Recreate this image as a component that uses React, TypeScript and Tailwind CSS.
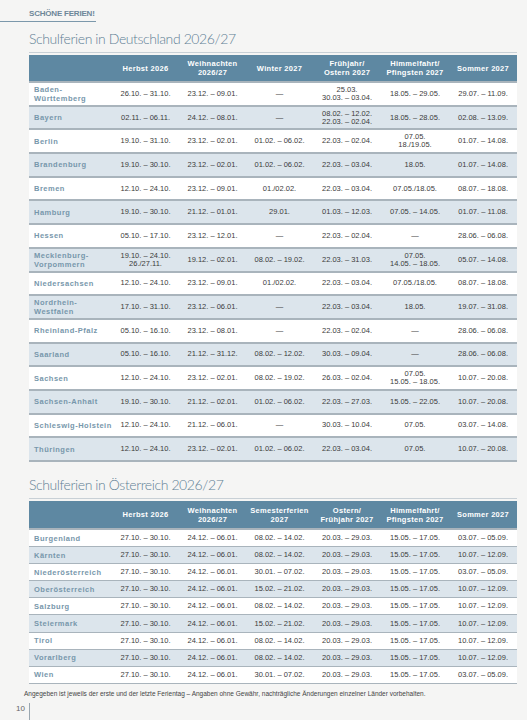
type Row = string[];

const deHead = [
  "",
  "Herbst 2026",
  "Weihnachten\n2026/27",
  "Winter 2027",
  "Frühjahr/\nOstern 2027",
  "Himmelfahrt/\nPfingsten 2027",
  "Sommer 2027",
];

const atHead = [
  "",
  "Herbst 2026",
  "Weihnachten\n2026/27",
  "Semesterferien\n2027",
  "Ostern/\nFrühjahr 2027",
  "Himmelfahrt/\nPfingsten 2027",
  "Sommer 2027",
];

const de: Row[] = [
  ["Baden-\nWürttemberg", "26.10. – 31.10.", "23.12. – 09.01.", "—", "25.03.\n30.03. – 03.04.", "18.05. – 29.05.", "29.07. – 11.09."],
  ["Bayern", "02.11. – 06.11.", "24.12. – 08.01.", "—", "08.02. – 12.02.\n22.03. – 02.04.", "18.05. – 28.05.", "02.08. – 13.09."],
  ["Berlin", "19.10. – 31.10.", "23.12. – 02.01.", "01.02. – 06.02.", "22.03. – 02.04.", "07.05.\n18./19.05.", "01.07. – 14.08."],
  ["Brandenburg", "19.10. – 30.10.", "23.12. – 02.01.", "01.02. – 06.02.", "22.03. – 03.04.", "18.05.", "01.07. – 14.08."],
  ["Bremen", "12.10. – 24.10.", "23.12. – 09.01.", "01./02.02.", "22.03. – 03.04.", "07.05./18.05.", "08.07. – 18.08."],
  ["Hamburg", "19.10. – 30.10.", "21.12. – 01.01.", "29.01.", "01.03. – 12.03.", "07.05. – 14.05.", "01.07. – 11.08."],
  ["Hessen", "05.10. – 17.10.", "23.12. – 12.01.", "—", "22.03. – 02.04.", "—", "28.06. – 06.08."],
  ["Mecklenburg-\nVorpommern", "19.10. – 24.10.\n26./27.11.", "19.12. – 02.01.", "08.02. – 19.02.", "22.03. – 31.03.", "07.05.\n14.05. – 18.05.", "05.07. – 14.08."],
  ["Niedersachsen", "12.10. – 24.10.", "23.12. – 09.01.", "01./02.02.", "22.03. – 03.04.", "07.05./18.05.", "08.07. – 18.08."],
  ["Nordrhein-\nWestfalen", "17.10. – 31.10.", "23.12. – 06.01.", "—", "22.03. – 03.04.", "18.05.", "19.07. – 31.08."],
  ["Rheinland-Pfalz", "05.10. – 16.10.", "23.12. – 08.01.", "—", "22.03. – 02.04.", "—", "28.06. – 06.08."],
  ["Saarland", "05.10. – 16.10.", "21.12. – 31.12.", "08.02. – 12.02.", "30.03. – 09.04.", "—", "28.06. – 06.08."],
  ["Sachsen", "12.10. – 24.10.", "23.12. – 02.01.", "08.02. – 19.02.", "26.03. – 02.04.", "07.05.\n15.05. – 18.05.", "10.07. – 20.08."],
  ["Sachsen-Anhalt", "19.10. – 30.10.", "21.12. – 02.01.", "01.02. – 06.02.", "22.03. – 27.03.", "15.05. – 22.05.", "10.07. – 20.08."],
  ["Schleswig-Holstein", "12.10. – 24.10.", "21.12. – 06.01.", "—", "30.03. – 10.04.", "07.05.", "03.07. – 14.08."],
  ["Thüringen", "12.10. – 24.10.", "23.12. – 02.01.", "01.02. – 06.02.", "22.03. – 03.04.", "07.05.", "10.07. – 20.08."],
];

const at: Row[] = [
  ["Burgenland", "08.02. – 14.02.", "03.07. – 05.09."],
  ["Kärnten", "08.02. – 14.02.", "10.07. – 12.09."],
  ["Niederösterreich", "30.01. – 07.02.", "03.07. – 05.09."],
  ["Oberösterreich", "15.02. – 21.02.", "10.07. – 12.09."],
  ["Salzburg", "08.02. – 14.02.", "10.07. – 12.09."],
  ["Steiermark", "15.02. – 21.02.", "10.07. – 12.09."],
  ["Tirol", "08.02. – 14.02.", "10.07. – 12.09."],
  ["Vorarlberg", "08.02. – 14.02.", "10.07. – 12.09."],
  ["Wien", "30.01. – 07.02.", "03.07. – 05.09."],
].map(([land, sem, som]) => [land, "27.10. – 30.10.", "24.12. – 06.01.", sem, "20.03. – 29.03.", "15.05. – 17.05.", som]);

function Table({ head, rows, compact }: { head: string[]; rows: Row[]; compact?: boolean }) {
  return (
    <div className="border-t border-[#c8d0d6] pt-[2px]">
      {/* header */}
      <div
        className={`grid grid-cols-[83px_67px_67px_67px_68px_68px_68px] bg-[#5e88a2] border-b-2 border-[#a9b4bc] ${
          compact ? "h-[29px]" : "h-[28px]"
        }`}
      >
        {head.map((h, i) => (
          <div
            key={i}
            className="flex items-center justify-center whitespace-pre-line text-center text-[7.5px] font-bold leading-[9px] tracking-[0.3px] text-white"
          >
            {h}
          </div>
        ))}
      </div>
      {rows.map((r, i) => (
        <div
          key={i}
          className={`grid grid-cols-[83px_67px_67px_67px_68px_68px_68px] ${
            compact ? "h-[17.1px] border-b-[1.5px]" : "h-[23.7px] border-b-2"
          } border-[#a9b4bc] ${i % 2 ? "bg-[#dce5ec]" : "bg-white"}`}
        >
          <div className="flex items-center whitespace-pre-line pl-[5px] text-[7.5px] font-bold leading-[9px] tracking-[0.5px] text-[#7797ab]">
            {r[0]}
          </div>
          {r.slice(1).map((c, j) => (
            <div
              key={j}
              className="flex items-center justify-center whitespace-pre-line text-center font-['Liberation_Sans_Narrow','Liberation_Sans',sans-serif] text-[7.5px] leading-[8px] text-[#3b3b3b]"
            >
              {c}
            </div>
          ))}
        </div>
      ))}
    </div>
  );
}

export default function App() {
  return (
    <div className="h-[720px] w-[527px] overflow-hidden bg-[#f5f5f4] font-['Liberation_Sans',Arial,sans-serif]">
      <div className="pt-[9px]">
        <div className="w-[96px] border-b border-[#7b98ab] pb-[2px] pl-[29px] text-[8px] font-bold leading-[10px] tracking-[-0.2px] text-[#6e8799]">
          SCHÖNE FERIEN!
        </div>
      </div>

      <div className="ml-[29px] w-[488px]">
        <h2 className="flex h-[30px] items-end pb-[3px] font-['Lato',sans-serif] text-[14px] font-light leading-[20px] tracking-[-0.4px] text-[#5f7f95]">
          Schulferien in Deutschland 2026/27
        </h2>
        <Table head={deHead} rows={de} />

        <h2 className="flex h-[36px] items-end pb-[3px] font-['Lato',sans-serif] text-[14px] font-light leading-[20px] tracking-[-0.4px] text-[#5f7f95]">
          Schulferien in Österreich 2026/27
        </h2>
        <Table head={atHead} rows={at} compact />
      </div>

      <p className="mt-[5px] pl-[24px] text-[6.5px] leading-[9px] text-[#444]">
        Angegeben ist jeweils der erste und der letzte Ferientag – Angaben ohne Gewähr, nachträgliche Änderungen einzelner Länder vorbehalten.
      </p>

      <div className="mt-[5px] flex items-start pl-[16px]">
        <span className="w-[13px] pt-[1px] text-[8px] leading-[9px] text-[#666]">10</span>
        <div className="h-[20px] border-l border-[#9aa7b0]" />
      </div>
    </div>
  );
}
